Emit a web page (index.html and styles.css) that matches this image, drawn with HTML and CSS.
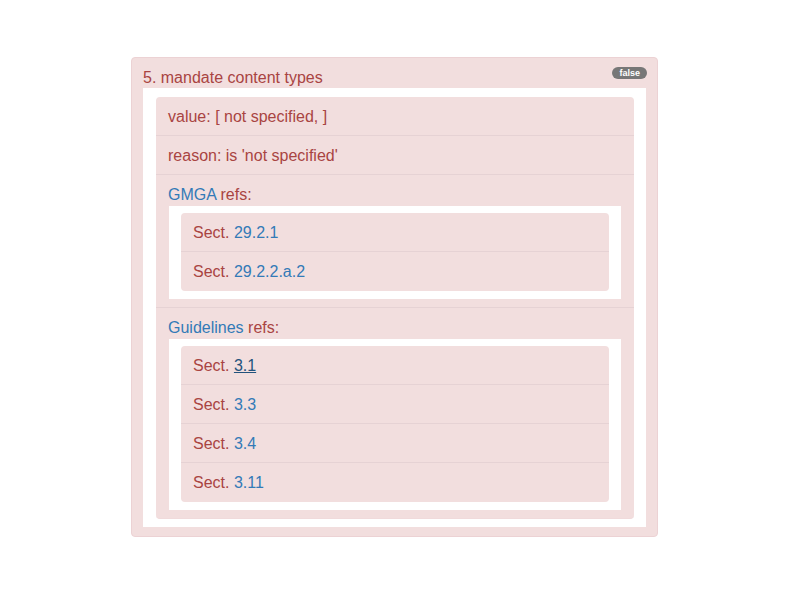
FILE: index.html
```html
<!DOCTYPE html>
<html>
<head>
<meta charset="utf-8">
<link rel="stylesheet" href="styles.css">
</head>
<body>
<div class="panel">
  <div class="panel-head">
    <span class="title">5. mandate content types</span>
    <span class="badge">false</span>
  </div>
  <div class="well">
    <ul class="list main">
      <li class="item">value: [ not specified, ]</li>
      <li class="item">reason: is 'not specified'</li>
      <li class="item">
        <div class="label"><a class="link" href="#">GMGA</a> refs:</div>
        <div class="refbox">
          <ul class="list">
            <li class="item">Sect. <a class="link" href="#">29.2.1</a></li>
            <li class="item">Sect. <a class="link" href="#">29.2.2.a.2</a></li>
          </ul>
        </div>
      </li>
      <li class="item">
        <div class="label"><a class="link" href="#">Guidelines</a> refs:</div>
        <div class="refbox">
          <ul class="list">
            <li class="item">Sect. <a class="link active" href="#">3.1</a></li>
            <li class="item">Sect. <a class="link" href="#">3.3</a></li>
            <li class="item">Sect. <a class="link" href="#">3.4</a></li>
            <li class="item">Sect. <a class="link" href="#">3.11</a></li>
          </ul>
        </div>
      </li>
    </ul>
  </div>
</div>
</body>
</html>
```
FILE: styles.css
```css
html, body {
  margin: 0;
  padding: 0;
  background: #ffffff;
}
body {
  font-family: "Liberation Sans", Arial, Helvetica, sans-serif;
  font-size: 16px;
  line-height: 22px;
  color: #a94442;
  padding: 57px 0 0 131px;
}
.panel {
  width: 503px;
  background: #f2dede;
  border: 1px solid #ecd2d4;
  border-radius: 4px;
  padding: 8px 11px 9px 11px;
}
.panel-head {
  display: flex;
  justify-content: space-between;
  align-items: flex-start;
  height: 22px;
}
.title {
  padding-top: 1px;
}
.badge {
  margin-top: 1px;
  margin-right: -1px;
  background: #777777;
  color: #ffffff;
  font-size: 9px;
  font-weight: bold;
  line-height: 12px;
  height: 12px;
  padding: 0 7px;
  border-radius: 6px;
}
.well {
  background: #ffffff;
  padding: 9px 12px 8px 13px;
}
.list {
  list-style: none;
  margin: 0;
  padding: 0;
  background: #f2dede;
  border-radius: 4px;
}
.main {
  border-bottom: 1px solid #f0dadb;
}
.item {
  padding: 9px 12px 7px 12px;
  border-bottom: 1px solid #e6d2d4;
}
.item:last-child {
  border-bottom: none;
}
.refbox .item:last-child {
  padding-bottom: 8px;
}
.label {
  margin-bottom: 0;
}
.refbox {
  background: #ffffff;
  margin: 0 1px 0 1px;
  padding: 7px 12px 8px 12px;
}
.main > .item:nth-child(n+3) {
  padding-bottom: 8px;
}
.link {
  color: #337ab7;
  text-decoration: none;
}
.link.active {
  color: #23527c;
  text-decoration: underline;
}
```
